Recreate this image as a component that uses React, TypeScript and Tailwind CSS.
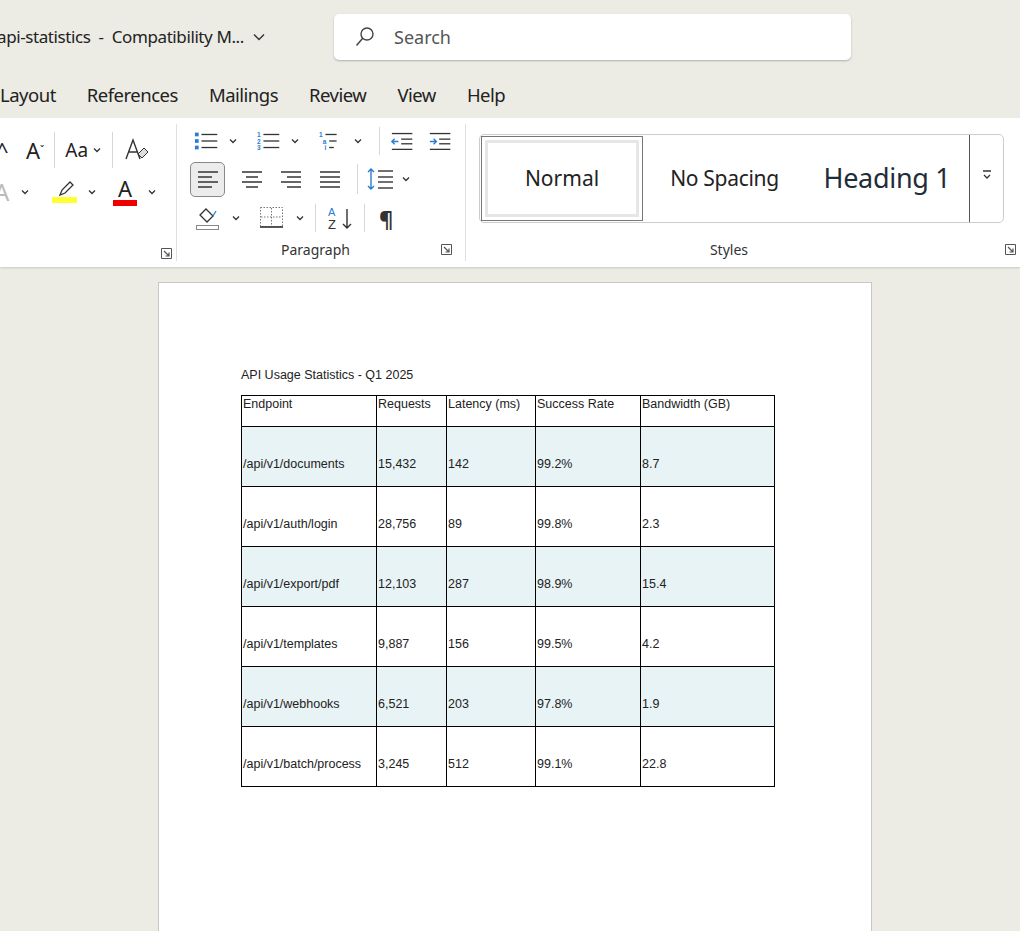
import React from "react";

const C = "#333";
const Chev = () => (
  <svg width="10" height="10" viewBox="0 0 10 10" className="shrink-0">
    <path d="M2 3.5 L5 6.5 L8 3.5" fill="none" stroke={C} strokeWidth="1.3" />
  </svg>
);
const Sep = ({ h = 34 }: { h?: number }) => <div className="w-px bg-[#d6d6d6]" style={{ height: h }} />;
const Launcher = () => (
  <svg width="11" height="11" viewBox="0 0 11 11">
    <path d="M0.5 0.5 H10.5 V10.5 M0.5 0.5 V10.5 H10.5" fill="none" stroke="#555" />
    <path d="M3 3 L8 8 M8 4.5 V8 H4.5" fill="none" stroke="#555" strokeWidth="1.2" />
  </svg>
);
const Lines = ({ kind }: { kind: "l" | "c" | "r" | "j" }) => {
  const rows = [5, 10, 15, 20];
  const spec: Record<string, [number, number][]> = {
    l: [[2, 22], [2, 16], [2, 22], [2, 16]],
    c: [[2, 22], [6, 18], [2, 22], [6, 18]],
    r: [[2, 22], [8, 22], [2, 22], [8, 22]],
    j: [[2, 22], [2, 22], [2, 22], [2, 22]],
  };
  return (
    <svg width="24" height="24" viewBox="0 0 24 24">
      {rows.map((y, i) => (
        <line key={i} x1={spec[kind][i][0]} x2={spec[kind][i][1]} y1={y} y2={y} stroke={C} strokeWidth="1.5" />
      ))}
    </svg>
  );
};

const rows = [
  ["/api/v1/documents", "15,432", "142", "99.2%", "8.7"],
  ["/api/v1/auth/login", "28,756", "89", "99.8%", "2.3"],
  ["/api/v1/export/pdf", "12,103", "287", "98.9%", "15.4"],
  ["/api/v1/templates", "9,887", "156", "99.5%", "4.2"],
  ["/api/v1/webhooks", "6,521", "203", "97.8%", "1.9"],
  ["/api/v1/batch/process", "3,245", "512", "99.1%", "22.8"],
];
const widths = [135, 70, 89, 105, 134];

export default function App() {
  return (
    <div className="w-[1020px] h-[931px] overflow-hidden bg-[#ecebe4] text-[#222]" style={{ fontFamily: '"Noto Sans", "Open Sans", sans-serif' }}>
      <div className="h-[74px] flex items-center">
        <div className="flex items-center gap-2 text-[17px] tracking-[-0.4px] -ml-[3px] w-[340px]">
          <span className="whitespace-nowrap">api-statistics&nbsp; - &nbsp;Compatibility M...</span>
          <svg width="14" height="14" viewBox="0 0 14 14"><path d="M2 4.5 L7 9.5 L12 4.5" fill="none" stroke={C} strokeWidth="1.4" /></svg>
        </div>
        <div className="ml-[-3px] w-[517px] h-[46px] bg-white rounded-[5px] shadow-[0_1px_2px_rgba(0,0,0,0.25)] flex items-center pl-[20px] gap-[18px] text-[#555] text-[18px]">
          <svg width="22" height="22" viewBox="0 0 22 22"><circle cx="13" cy="8" r="6" fill="none" stroke="#444" strokeWidth="1.4" /><path d="M8.7 12.3 L2.5 19.5" stroke="#444" strokeWidth="1.5" /></svg>
          <span>Search</span>
        </div>
      </div>
      <div className="h-[44px] flex items-center gap-[31px] text-[18.5px] tracking-[-0.5px] pb-[2px]">
        <span>Layout</span><span>References</span><span>Mailings</span><span>Review</span><span>View</span><span>Help</span>
      </div>
      <div className="h-[149px] bg-white flex shadow-[0_1px_2px_rgba(0,0,0,0.15)]">
        <div className="w-[176px] flex flex-col">
          <div className="flex items-center h-[44px] mt-[10px] gap-[10px] -ml-[4px]">
            <span className="text-[22px] w-[14px] overflow-hidden">^</span>
            <span className="text-[22px] ml-[6px]">A<sup className="text-[10px]">ˇ</sup></span>
            <Sep h={36} />
            <span className="text-[19px] flex items-center gap-1">Aa <Chev /></span>
            <Sep h={36} />
            <svg width="26" height="26" viewBox="0 0 26 26"><path d="M3 22 L10 3 L17 22 M6 15 H14" fill="none" stroke={C} strokeWidth="1.4" /><path d="M15 17 L21 11 L25 15 L19 21 Z" fill="#ddd" stroke={C} /></svg>
          </div>
          <div className="flex items-center h-[40px] gap-[10px] -ml-[6px]">
            <span className="text-[24px] text-[#bbb] w-[16px] overflow-hidden">A</span>
            <span className="text-[#bbb]"><Chev /></span>
            <div className="flex flex-col items-center ml-[12px]"><svg width="22" height="16" viewBox="0 0 22 16"><path d="M6 14 L8 9 L16 1 L19 4 L11 12 Z" fill="none" stroke={C} strokeWidth="1.3" /></svg><div className="w-[25px] h-[6px] bg-[#ffff33]" /></div>
            <Chev />
            <div className="flex flex-col items-center ml-[6px]"><span className="text-[22px] leading-[20px]">A</span><div className="w-[24px] h-[6px] bg-[#e00] mt-[2px]" /></div>
            <Chev />
          </div>
          <div className="mt-auto mb-[8px] self-end mr-[4px]"><Launcher /></div>
        </div>
        <div className="w-px bg-[#e0e0e0] my-[6px]" />
        <div className="w-[288px] flex flex-col px-[13px]">
          <div className="flex items-center h-[36px] mt-[5px] gap-[10px] pl-[4px]">
            <svg width="26" height="24" viewBox="0 0 26 24"><g fill="#2b7cd3"><rect x="1" y="3" width="4" height="4" /><rect x="1" y="10" width="4" height="4" /><rect x="1" y="17" width="4" height="4" /></g><g stroke={C} strokeWidth="1.4"><line x1="8" x2="25" y1="5" y2="5" /><line x1="8" x2="25" y1="12" y2="12" /><line x1="8" x2="25" y1="19" y2="19" /></g></svg>
            <Chev />
            <svg width="26" height="24" viewBox="0 0 26 24" className="ml-[8px]"><g fill="#2b7cd3" fontSize="7" fontFamily="Liberation Sans" fontWeight="bold"><text x="1" y="8">1</text><text x="1" y="15">2</text><text x="1" y="22">3</text></g><g stroke={C} strokeWidth="1.4"><line x1="8" x2="25" y1="5" y2="5" /><line x1="8" x2="25" y1="12" y2="12" /><line x1="8" x2="25" y1="19" y2="19" /></g></svg>
            <Chev />
            <svg width="26" height="24" viewBox="0 0 26 24" className="ml-[8px]"><g fill="#2b7cd3" fontSize="7" fontFamily="Liberation Sans" fontWeight="bold"><text x="1" y="8">1</text><text x="5" y="15">a</text><text x="7" y="22">i</text></g><g stroke={C} strokeWidth="1.4"><line x1="8" x2="20" y1="5" y2="5" /><line x1="12" x2="20" y1="12" y2="12" /><line x1="12" x2="17" y1="19" y2="19" /></g></svg>
            <Chev />
            <div className="ml-[6px]"><Sep h={28} /></div>
            <svg width="26" height="24" viewBox="0 0 26 24"><g stroke={C} strokeWidth="1.4"><line x1="2" x2="24" y1="4" y2="4" /><line x1="12" x2="24" y1="10" y2="10" /><line x1="12" x2="24" y1="15" y2="15" /><line x1="2" x2="24" y1="21" y2="21" /></g><path d="M9 12.5 H2 M5 9.5 L2 12.5 L5 15.5" fill="none" stroke="#2b7cd3" strokeWidth="1.5" /></svg>
            <svg width="26" height="24" viewBox="0 0 26 24" className="ml-[4px]"><g stroke={C} strokeWidth="1.4"><line x1="2" x2="24" y1="4" y2="4" /><line x1="12" x2="24" y1="10" y2="10" /><line x1="12" x2="24" y1="15" y2="15" /><line x1="2" x2="24" y1="21" y2="21" /></g><path d="M2 12.5 H9 M6 9.5 L9 12.5 L6 15.5" fill="none" stroke="#2b7cd3" strokeWidth="1.5" /></svg>
          </div>
          <div className="flex items-center h-[40px] gap-[15px]">
            <div className="w-[35px] h-[35px] rounded-[5px] border border-[#888] bg-[#ececec] flex items-center justify-center"><Lines kind="l" /></div>
            <Lines kind="c" /><Lines kind="r" /><Lines kind="j" />
            <Sep h={30} />
            <div className="flex items-center gap-[6px] -ml-[6px]">
              <svg width="28" height="24" viewBox="0 0 28 24"><path d="M4 2 V22 M1 5 L4 2 L7 5 M1 19 L4 22 L7 19" fill="none" stroke="#2b7cd3" strokeWidth="1.4" /><g stroke={C} strokeWidth="1.4"><line x1="11" x2="26" y1="4" y2="4" /><line x1="11" x2="26" y1="10" y2="10" /><line x1="11" x2="26" y1="15" y2="15" /><line x1="11" x2="26" y1="21" y2="21" /></g></svg>
              <Chev />
            </div>
          </div>
          <div className="flex items-center h-[38px] gap-[10px] pl-[5px]">
            <svg width="26" height="26" viewBox="0 0 26 26"><path d="M5 10 L11 4 L18 11 L12 17 Z" fill="none" stroke={C} strokeWidth="1.3" /><path d="M18 11 L21 6" stroke="#2b7cd3" strokeWidth="1.3" /><rect x="1.5" y="20.5" width="22" height="4" fill="none" stroke="#888" /></svg>
            <Chev />
            <svg width="26" height="24" viewBox="0 0 26 24" className="ml-[8px]"><rect x="1.5" y="1.5" width="22" height="19" fill="none" stroke="#777" strokeDasharray="1.5 1.5" /><line x1="12.5" x2="12.5" y1="2" y2="20" stroke="#777" strokeDasharray="1.5 1.5" /><line x1="2" x2="23" y1="11" y2="11" stroke="#777" strokeDasharray="1.5 1.5" /><line x1="1" x2="24" y1="21" y2="21" stroke={C} strokeWidth="1.6" /></svg>
            <Chev />
            <Sep h={28} />
            <svg width="28" height="26" viewBox="0 0 28 26"><text x="2" y="11" fontSize="11" fill="#2b7cd3" fontFamily="Liberation Sans">A</text><text x="2" y="24" fontSize="13" fill={C} fontFamily="Liberation Sans">Z</text><path d="M21 4 V23 M17 19 L21 23 L25 19" fill="none" stroke={C} strokeWidth="1.4" /></svg>
            <Sep h={28} />
            <span className="text-[22px] font-bold text-[#333] ml-[4px]">¶</span>
          </div>
          <div className="mt-auto mb-[7px] flex items-center">
            <span className="flex-1 text-center text-[14px] text-[#333]">Paragraph</span>
            <Launcher />
          </div>
        </div>
        <div className="w-px bg-[#e0e0e0] my-[6px]" />
        <div className="flex-1 flex flex-col pl-[13px] pr-[4px]">
          <div className="mt-[16px] h-[89px] w-[525px] border border-[#ccc] rounded-[5px] flex items-stretch overflow-hidden">
            <div className="w-[162px] border border-[#777] m-[1px] p-[3px] flex"><div className="flex-1 border-[3px] border-[#e6e6e6] flex items-center justify-center text-[21px]">Normal</div></div>
            <div className="w-[161px] flex items-center justify-center text-[21px] tracking-[-0.3px]">No Spacing</div>
            <div className="flex-1 flex items-center justify-center text-[27px] text-[#1f2d3a] tracking-[-0.3px]">Heading 1</div>
            <div className="w-[34px] border-l border-[#555] flex items-center justify-center -mt-[8px]">
              <svg width="12" height="12" viewBox="0 0 12 12"><line x1="2" x2="10" y1="2" y2="2" stroke={C} strokeWidth="1.3" /><path d="M3 6 L6 9 L9 6" fill="none" stroke={C} strokeWidth="1.3" /></svg>
            </div>
          </div>
          <div className="mt-auto mb-[7px] flex items-center">
            <span className="flex-1 text-center text-[14px] text-[#333] pr-[26px]">Styles</span>
            <Launcher />
          </div>
        </div>
      </div>
      <div className="flex mt-[15px]">
        <div className="ml-[158px] w-[714px] h-[700px] bg-white border border-[#c8c8c8] pt-[85px] pl-[82px]" style={{ fontFamily: '"Liberation Sans", Arial, sans-serif' }}>
          <div className="text-[12.5px] leading-[15px] mb-[12px]">API Usage Statistics - Q1 2025</div>
          <table className="border-collapse text-[12.5px]">
            <tbody>
              <tr className="h-[31px]">
                {["Endpoint", "Requests", "Latency (ms)", "Success Rate", "Bandwidth (GB)"].map((h, i) => (
                  <td key={i} style={{ width: widths[i] }} className="border border-black align-top p-0 pl-[1px] pt-[1px] leading-[15px]">{h}</td>
                ))}
              </tr>
              {rows.map((r, ri) => (
                <tr key={ri} className={`h-[60px] ${ri % 2 === 0 ? "bg-[#e8f3f5]" : "bg-white"}`}>
                  {r.map((c, i) => (
                    <td key={i} style={{ width: widths[i] }} className="border border-black p-0 pl-[1px] align-middle pt-[16px] whitespace-nowrap">{c}</td>
                  ))}
                </tr>
              ))}
            </tbody>
          </table>
        </div>
      </div>
    </div>
  );
}
